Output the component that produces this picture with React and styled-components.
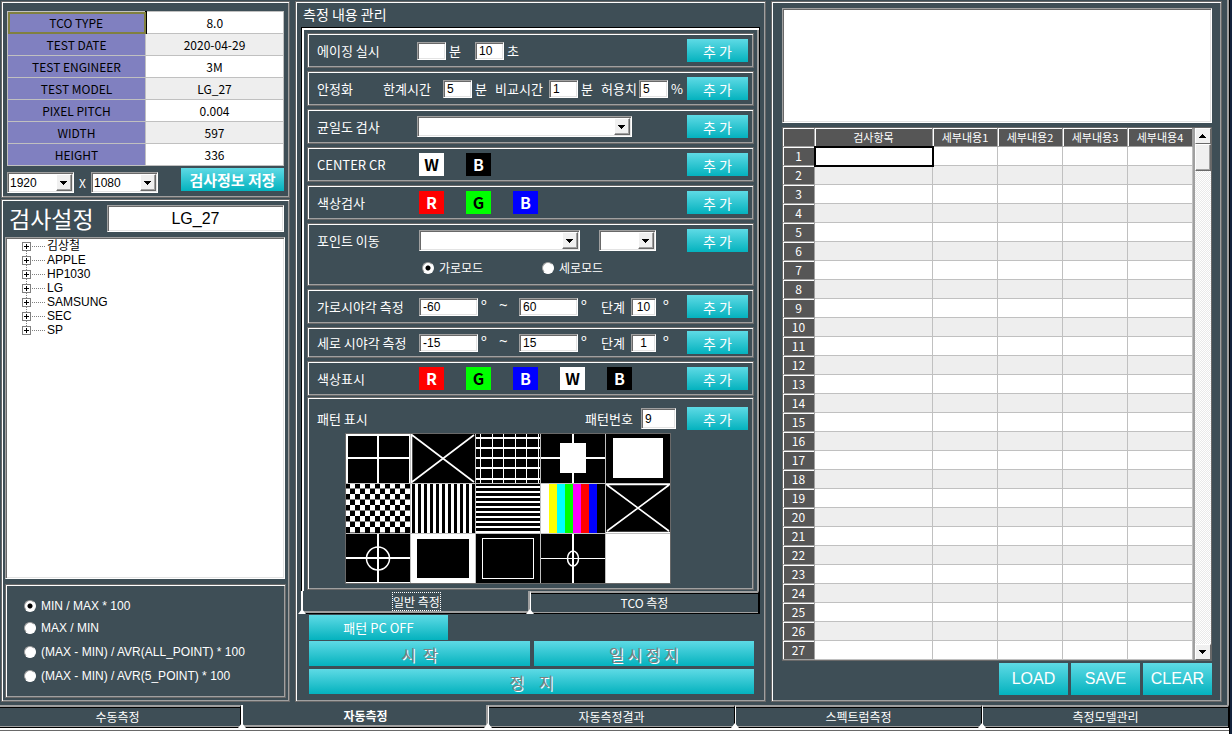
import React, { useState } from 'react'
import styled, { createGlobalStyle, css } from 'styled-components';

const KR_FONT = `'Noto Sans CJK KR', sans-serif`;
const SYMBOL_FONT = `'Noto Sans', 'Noto Sans CJK KR', sans-serif`;
const CLASSIC_FONT = `'Liberation Sans', 'Noto Sans CJK KR', sans-serif`;

const BG = '#3e4e56';
const DARK = '#696969';
const GRAY = '#a0a0a0';

const GlobalStyle = createGlobalStyle`
  * {
    box-sizing: border-box;
  }
  body {
    margin: 0;
    background: #14233c;
    font-family: ${KR_FONT};
    font-size: 12px;
    color: #fff;
  }
  button, input, select, textarea {
    margin: 0;
    border-radius: 0;
    font-family: inherit;
  }
`;

const raised = css`
  border: 1px solid ${DARK};
  box-shadow: inset 1px 1px 0 #fff, inset -1px -1px 0 ${GRAY};
`;

const sunken = css`
  border: 1px solid;
  border-color: ${GRAY} #fff #fff ${GRAY};
  box-shadow: inset 1px 1px 0 ${DARK}, inset -1px -1px 0 #e3e3e3;
  background: #fff;
  color: #000;
`;

/* ---------- window ---------- */

const Window = styled.div`
  margin-right: 2px;
  background: ${BG};
  border-right: 1px solid #000;
`;

const Page = styled.main`
  display: grid;
  grid-template-columns: 289fr 471fr 451fr;
  gap: 5px;
  padding: 1px 5px 3px 1px;
  border-right: 2px solid ${GRAY};
`;

const Column = styled.div`
  display: flex;
  flex-direction: column;
  gap: 1px;
  min-width: 0;
`;

const Panel = styled.section`
  ${raised}
  display: flex;
  flex-direction: column;
  flex: ${({ $grow }) => ($grow ? '1 1 auto' : '0 0 auto')};
  padding: ${({ $pad }) => $pad};
`;

/* ---------- controls ---------- */

const Button = styled.button`
  flex: 0 0 auto;
  width: ${({ $w }) => ($w ? `${$w}px` : 'auto')};
  height: ${({ $h }) => $h || 23}px;
  padding: 0;
  border: 0;
  background: linear-gradient(#5edae5, #04b2be);
  color: #fff;
  font-family: ${KR_FONT};
  font-size: ${({ $size }) => $size || 14}px;
  line-height: 20px;
  white-space: pre;
`;

const AddButton = styled(Button)`
  width: 61px;
  margin-left: auto;
`;

const SaveInfoButton = styled(Button)`
  margin-left: auto;
  align-self: flex-start;
  font-size: 15px;
  font-weight: 700;
`;

const CommandButton = styled(Button)`
  font-family: ${CLASSIC_FONT};
`;

const RunButton = styled(Button)`
  flex: 1 1 0;
  height: 25px;
  font-size: 16px;
  color: #808080;
  text-shadow: 1px 1px 0 #fff;
`;

const Field = styled.input`
  ${sunken}
  flex: 0 0 auto;
  width: ${({ $w }) => $w}px;
  height: ${({ $h }) => $h || 18}px;
  padding: 0 3px;
  font-family: ${CLASSIC_FONT};
  font-size: 12px;
  text-align: ${({ $center }) => ($center ? 'center' : 'left')};
`;

const ModelField = styled.input`
  ${sunken}
  flex: 1 1 auto;
  min-width: 0;
  height: 27px;
  font-family: ${CLASSIC_FONT};
  font-size: 16px;
  text-align: center;
`;

const SelectBox = styled.span`
  position: relative;
  display: block;
  flex: 0 0 auto;
  width: ${({ $w }) => $w}px;
  margin-right: ${({ $gap }) => $gap || 0}px;
`;

const NativeSelect = styled.select`
  ${sunken}
  appearance: none;
  display: block;
  width: 100%;
  height: 21px;
  padding: 0 18px 0 2px;
  font-family: ${CLASSIC_FONT};
  font-size: 12px;
`;

const DropMark = styled.span`
  position: absolute;
  top: 2px;
  right: 2px;
  width: 16px;
  height: 17px;
  border: 1px solid;
  border-color: #fff ${DARK} ${DARK} #fff;
  box-shadow: inset -1px -1px 0 ${GRAY};
  background: #f0f0f0;
  pointer-events: none;
`;

const Select = ({ label, options, width, gap }) => (
  <SelectBox $w={width} $gap={gap}>
    <NativeSelect aria-label={label}>
      {options.map((option) => <option key={option}>{option}</option>)}
    </NativeSelect>
    <DropMark>
      <svg width="14" height="15" shapeRendering="crispEdges">
        <path d="M3 6h7v1h-1v1h-1v1h-1v1h-1v-1h-1v-1h-1v-1h-1z" />
      </svg>
    </DropMark>
  </SelectBox>
);

const RadioLabel = styled.label`
  display: flex;
  align-items: center;
  gap: 5px;
  width: ${({ $w }) => ($w ? `${$w}px` : 'auto')};
  height: ${({ $h }) => $h || 16}px;
  font-family: ${({ $classic }) => ($classic ? CLASSIC_FONT : KR_FONT)};
  font-size: 12px;
  line-height: 16px;
`;

const RadioInput = styled.input`
  appearance: none;
  width: 12px;
  height: 12px;
  border: 1px solid;
  border-color: ${GRAY} #fff #fff ${GRAY};
  border-radius: 50%;
  background: #fff;

  &:checked {
    background: radial-gradient(circle, #000 2px, #fff 3px);
  }
`;

const Radio = ({ text, ...rest }) => {
  const { width, height, classic, ...input } = rest;
  return (
    <RadioLabel $w={width} $h={height} $classic={classic}>
      <RadioInput type="radio" {...input} />
      {text}
    </RadioLabel>
  );
};

/* ---------- left column ---------- */

const InfoTable = styled.table`
  width: 100%;
  table-layout: fixed;
  border-collapse: collapse;
  border: 1px solid ${DARK};
  color: #000;
  line-height: 16px;

  th, td {
    height: 22px;
    padding: 0;
    font-weight: 400;
    text-align: center;
    border: 1px solid #c0c0c0;
  }
  th {
    background: #8080c0;
  }
  td {
    background: #fff;
  }
  tr:nth-child(even) td {
    background: #eee;
  }
  tr:first-child th {
    outline: 2px solid #808040;
    outline-offset: -2px;
    border-right: 2px solid #000;
  }
`;

const SizeRow = styled.div`
  display: flex;
  align-items: flex-end;
  height: 25px;
  margin-top: 2px;
`;

const Times = styled.span`
  width: 17px;
  text-align: center;
  line-height: 20px;
`;

const SetupHead = styled.div`
  display: flex;
  align-items: center;
  padding: 0 2px 0 4px;
`;

const SetupTitle = styled.h2`
  flex: 0 0 98px;
  margin: 0;
  font-family: ${KR_FONT};
  font-size: 23px;
  font-weight: 400;
  line-height: 27px;
`;

const Tree = styled.ul`
  ${sunken}
  flex: 1 1 auto;
  margin: 5px 1px 5px 0;
  padding: 1px 0 0 16px;
  list-style: none;
  font-family: ${CLASSIC_FONT};
  font-size: 12px;
`;

const TreeItem = styled.li`
  display: flex;
  align-items: center;
  gap: 1px;
  height: 14px;
  line-height: 14px;
`;

const FormulaBox = styled.fieldset`
  ${raised}
  display: flex;
  flex-direction: column;
  min-width: 0;
  margin: 0;
  padding: 10px 18px 10px;
`;

/* ---------- middle column ---------- */

const PanelTitle = styled.h2`
  margin: 0 0 4px 2px;
  font-family: ${KR_FONT};
  font-size: 14px;
  font-weight: 400;
  line-height: 18px;
`;

const TabBox = styled.div`
  border: 1px solid #000;
  border-bottom: 0;
  box-shadow: inset 2px 2px 0 #fff, inset -2px 0 0 ${GRAY};
  padding: 5px 5px 0;
`;

const Group = styled.div`
  ${raised}
  display: flex;
  flex-direction: column;
  justify-content: ${({ $top }) => ($top ? 'flex-start' : 'center')};
  height: ${({ $h }) => $h || 35}px;
  margin-bottom: ${({ $gap }) => $gap || 3}px;
  padding: ${({ $top }) => $top || 0}px 5px 0 9px;
`;

const Line = styled.div`
  display: flex;
  align-items: center;
  font-family: ${KR_FONT};
  font-size: 13px;
  line-height: 20px;
  white-space: nowrap;
`;

const Caption = styled.span`
  flex: 0 0 auto;
  width: ${({ $w }) => $w}px;
`;

const Unit = styled.span`
  flex: 0 0 auto;
  width: ${({ $w }) => $w}px;
  padding-left: 3px;
`;

const Degree = styled(Unit)`
  align-self: flex-start;
  font-family: ${SYMBOL_FONT};
  font-size: 15px;
  line-height: 18px;
`;

const Swatch = styled.button`
  width: 25px;
  height: 23px;
  margin: 0 22px 0 0;
  padding: 0;
  border: 0;
  background: ${({ $bg }) => $bg};
  color: ${({ $fg }) => $fg};
  font-family: ${KR_FONT};
  font-size: 16px;
  font-weight: 700;
  line-height: 23px;
`;

const ModeRow = styled.div`
  display: flex;
  padding: 8px 0 0 105px;
`;

const PatternGrid = styled.div`
  display: grid;
  grid-template-columns: repeat(5, 64px);
  gap: 1px;
  width: 326px;
  margin: 3px 0 0 28px;
  border: 1px solid ${DARK};
  background: #c0c0c0;

  svg {
    display: block;
    background: #000;
  }
`;

const Tabs = styled.nav`
  display: flex;
`;

const Tab = styled.button`
  position: relative;
  flex: 1 1 0;
  height: 23px;
  padding: 0;
  background: ${BG};
  color: #fff;
  font-family: ${KR_FONT};
  font-size: 12px;
  font-weight: ${({ $active, $bold }) => ($active && $bold ? 700 : 400)};
  line-height: 16px;
  border: 0 solid;
  border-color: ${GRAY} #000 #000 #fff;
  border-width: ${({ $active }) => ($active ? '0 0 1px 2px' : '2px 1px 1px 1px')};
  box-shadow: ${({ $active }) => ($active
    ? `inset -2px -2px 0 ${GRAY}`
    : `inset 0 1px 0 #000, inset 0 -1px 0 ${GRAY}`)};

  /* notch where two tabs meet */
  &::before {
    content: '';
    position: absolute;
    left: -5px;
    bottom: -1px;
    width: 8px;
    height: 5px;
    background: #fff;
    clip-path: polygon(50% 0, 100% 100%, 0 100%);
    z-index: 1;
  }
`;

const InnerTabs = styled(Tabs)`
  border-right: 1px solid #000;
`;

const FocusText = styled.span`
  outline: 1px dotted #fff;
`;

const Commands = styled.div`
  display: flex;
  flex-direction: column;
  padding: 1px 6px 0 8px;
`;

const CommandRow = styled.div`
  display: flex;
  gap: 4px;
  margin-bottom: ${({ $gap }) => $gap || 1}px;
`;

/* ---------- right column ---------- */

const Memo = styled.textarea`
  ${sunken}
  display: block;
  width: 100%;
  height: 115px;
  resize: none;
`;

const SheetFrame = styled.div`
  display: flex;
  margin-top: 4px;
  border: 1px solid ${DARK};
`;

const Sheet = styled.table`
  flex: 1 1 0;
  min-width: 0;
  table-layout: fixed;
  border-collapse: separate;
  border-spacing: 0;
  color: #000;
  line-height: 16px;

  th, td {
    height: 19px;
    padding: 0;
    border: 0 solid #c0c0c0;
    border-width: 0 1px 1px 0;
  }
  th {
    background: #565656;
    color: #fff;
    font-weight: 400;
    text-align: center;
    border-color: ${GRAY};
    box-shadow: inset 1px 1px 0 #fff;
  }
  thead th {
    font-size: 11px;
  }
  td {
    background: #fff;
  }
  tbody tr:nth-child(even) td {
    background: #eee;
  }
  tbody tr:first-child td:nth-child(2) {
    outline: 2px solid #000;
    outline-offset: -1px;
  }
`;

const ScrollTrack = styled.div`
  display: flex;
  flex-direction: column;
  flex: 0 0 18px;
  border-left: 2px solid ${GRAY};
  background: repeating-conic-gradient(#fff 0 25%, #eaeaea 0 50%) 0 0 / 2px 2px;
`;

const ScrollButton = styled.button`
  width: 16px;
  height: 16px;
  padding: 0;
  border: 1px solid;
  border-color: #fff ${DARK} ${DARK} #fff;
  background: #f0f0f0;

  &:last-child {
    margin-top: auto;
  }
  svg {
    display: block;
  }
`;

const ScrollThumb = styled.div`
  height: 27px;
  border: 1px solid;
  border-color: #fff ${DARK} ${DARK} #fff;
  box-shadow: inset -1px -1px 0 ${GRAY};
  background: #f0f0f0;
`;

const SheetCommands = styled.div`
  display: flex;
  justify-content: flex-end;
  gap: 3px;
  margin-top: 2px;
`;

/* ---------- bottom ---------- */

const BottomTabs = styled(Tabs)`
  margin-left: -6px;
`;

const Footer = styled.div`
  height: 6px;
  border: solid #fff;
  border-width: 2px 0;
  background: ${DARK};
  background-clip: padding-box;
  box-shadow: inset 0 -1px 0 #fff;
`;

const INFO = [
  ['TCO TYPE', '8.0'],
  ['TEST DATE', '2020-04-29'],
  ['TEST ENGINEER', '3M'],
  ['TEST MODEL', 'LG_27'],
  ['PIXEL PITCH', '0.004'],
  ['WIDTH', '597'],
  ['HEIGHT', '336'],
];

const MODELS = ['김상철', 'APPLE', 'HP1030', 'LG', 'SAMSUNG', 'SEC', 'SP'];

const FORMULAS = [
  ['MIN / MAX * 100', 22],
  ['MAX / MIN', 22],
  ['(MAX - MIN) / AVR(ALL_POINT) * 100', 26],
  ['(MAX - MIN) / AVR(5_POINT) * 100', 22],
];

const COLORS = {
  W: ['W', '#fff', '#000'],
  K: ['B', '#000', '#fff'],
  R: ['R', '#f00', '#fff'],
  G: ['G', '#0f0', '#000'],
  B: ['B', '#00f', '#fff'],
};

const SHEET_HEADS = ['검사항목', '세부내용1', '세부내용2', '세부내용3', '세부내용4'];
const PAGES = ['수동측정', '자동측정', '자동측정결과', '스펙트럼측정', '측정모델관리'];

const range = (n) => Array.from({ length: n }, (_, i) => i);

const Swatches = ({ keys }) => keys.split('').map((k) => (
  <Swatch key={k} $bg={COLORS[k][1]} $fg={COLORS[k][2]}>{COLORS[k][0]}</Swatch>
));

const Expander = ({ first, last }) => (
  <svg width="24" height="14" shapeRendering="crispEdges" fill="none">
    <path d={`M4.5 ${first ? 6 : 0}V${last ? 6 : 14}M10 7.5H24`} stroke="#808080" strokeDasharray="1 1" />
    <rect x="0.5" y="3.5" width="8" height="8" fill="#fff" stroke="#808080" />
    <path d="M2 7.5h5M4.5 5v5" stroke="#000" />
  </svg>
);

/* test patterns, each one drawn on a 64 x 49 cell */
const PATTERNS = [
  <path d="M0.5 0V49M0 .5H64M63.5 0V49M32 0V49M0 24H64" stroke="#fff" strokeWidth="2" shapeRendering="crispEdges" />,
  <path d="M1 1L63 48M63 1L1 48M.5 0V49" stroke="#fff" strokeWidth="1.6" />,
  <>
    {[4, 16, 27, 39, 50, 62].map((x) => <path key={x} d={`M${x}.5 0V49`} stroke="#fff" />)}
    {[4, 14, 24, 34, 45].map((y) => <path key={y} d={`M0 ${y}H64`} stroke="#fff" strokeWidth="2" />)}
  </>,
  <>
    <path d="M32 0V49M0 24H64" stroke="#fff" strokeWidth="2" />
    <rect x="19" y="9" width="26" height="30" fill="#fff" />
  </>,
  <rect x="7" y="4" width="50" height="40" fill="#fff" />,
  range(9).map((r) => range(13).filter((c) => (r + c) % 2 === 1).map((c) => (
    <rect key={`${r}-${c}`} x={c * 5 - 1} y={r * 5.5 - 1} width="5" height="5.5" fill="#fff" />
  ))),
  range(11).map((i) => <rect key={i} x={i * 6 - 2} y="0" width="3" height="49" fill="#fff" />),
  range(10).map((i) => <rect key={i} x="0" y={i * 5 + 2} width="64" height="2" fill="#fff" />),
  ['#fff', '#ff0', '#0ff', '#0f0', '#f0f', '#f00', '#00f'].map((c, i) => (
    <rect key={c} x={i * 8} y="0" width="8" height="49" fill={c} />
  )),
  <path d="M0 .5H64M1 1L63 47M63 1L1 47M0 48.5H64" stroke="#fff" strokeWidth="1.6" />,
  <>
    <path d="M32 0V49M0 24H64M0 49H64" stroke="#fff" strokeWidth="2" />
    <circle cx="32" cy="24.5" r="11.5" fill="none" stroke="#fff" strokeWidth="1.5" />
  </>,
  <>
    <rect width="64" height="49" fill="#fff" />
    <rect x="6" y="5" width="52" height="39" />
  </>,
  <rect x="6.5" y="4.5" width="51" height="40" fill="none" stroke="#fff" />,
  <>
    <path d="M32 0V49" stroke="#fff" strokeWidth="2" />
    <path d="M0 24.5H64" stroke="#fff" />
    <ellipse cx="32" cy="24.5" rx="5.5" ry="7.5" fill="none" stroke="#fff" strokeWidth="1.5" />
  </>,
  <rect width="64" height="49" fill="#fff" />,
];

const AngleLine = ({ title, from, to, step }) => (
  <Line>
    <Caption $w={102}>{title}</Caption>
    <Field $w={59} defaultValue={from} aria-label={`${title} 시작`} />
    <Degree $w={18}>º</Degree>
    <Degree $w={23}>~</Degree>
    <Field $w={59} defaultValue={to} aria-label={`${title} 끝`} />
    <Degree $w={20}>º</Degree>
    <Unit $w={33}>단계</Unit>
    <Field $w={25} $center defaultValue={step} aria-label={`${title} 단계`} />
    <Degree $w={16}>&nbsp;º</Degree>
    <AddButton>추 가</AddButton>
  </Line>
);

const LeftColumn = () => (
  <Column>
    <Panel $pad="9px 5px 4px">
      <InfoTable>
        <tbody>
          {INFO.map(([name, value]) => (
            <tr key={name}><th scope="row">{name}</th><td>{value}</td></tr>
          ))}
        </tbody>
      </InfoTable>
      <SizeRow>
        <Select label="가로 해상도" options={['1920']} width={67} />
        <Times>X</Times>
        <Select label="세로 해상도" options={['1080']} width={67} />
        <SaveInfoButton $w={103}>검사정보 저장</SaveInfoButton>
      </SizeRow>
    </Panel>

    <Panel $grow $pad="5px 3px 3px">
      <SetupHead>
        <SetupTitle>검사설정</SetupTitle>
        <ModelField defaultValue="LG_27" aria-label="검사설정" />
      </SetupHead>
      <Tree>
        {MODELS.map((name, i) => (
          <TreeItem key={name}>
            <Expander first={i === 0} last={i === MODELS.length - 1} />
            {name}
          </TreeItem>
        ))}
      </Tree>
      <FormulaBox>
        {FORMULAS.map(([text, height], i) => (
          <Radio key={text} text={text} name="formula" height={height} classic defaultChecked={i === 0} />
        ))}
      </FormulaBox>
    </Panel>
  </Column>
);

const MiddleColumn = () => (
  <Panel $pad="3px 5px 0">
    <PanelTitle>측정 내용 관리</PanelTitle>
    <TabBox>
      <Group>
        <Line>
          <Caption $w={100}>에이징 실시</Caption>
          <Field $w={29} aria-label="에이징 분" />
          <Unit $w={29}>분</Unit>
          <Field $w={29} defaultValue="10" aria-label="에이징 초" />
          <Unit $w={29}>초</Unit>
          <AddButton>추 가</AddButton>
        </Line>
      </Group>
      <Group>
        <Line>
          <Caption $w={66}>안정화</Caption>
          <Caption $w={60}>한계시간</Caption>
          <Field $w={29} defaultValue="5" aria-label="한계시간" />
          <Unit $w={23}>분</Unit>
          <Caption $w={54}>비교시간</Caption>
          <Field $w={29} defaultValue="1" aria-label="비교시간" />
          <Unit $w={23}>분</Unit>
          <Caption $w={38}>허용치</Caption>
          <Field $w={29} defaultValue="5" aria-label="허용치" />
          <Unit $w={16}>%</Unit>
          <AddButton>추 가</AddButton>
        </Line>
      </Group>
      <Group>
        <Line>
          <Caption $w={100}>균일도 검사</Caption>
          <Select label="균일도 검사" options={['']} width={215} />
          <AddButton>추 가</AddButton>
        </Line>
      </Group>
      <Group>
        <Line>
          <Caption $w={102}>CENTER CR</Caption>
          <Swatches keys="WK" />
          <AddButton>추 가</AddButton>
        </Line>
      </Group>
      <Group>
        <Line>
          <Caption $w={102}>색상검사</Caption>
          <Swatches keys="RGB" />
          <AddButton>추 가</AddButton>
        </Line>
      </Group>
      <Group $h={63} $top={5}>
        <Line>
          <Caption $w={102}>포인트 이동</Caption>
          <Select label="포인트" options={['']} width={161} gap={19} />
          <Select label="포인트 번호" options={['']} width={57} />
          <AddButton>추 가</AddButton>
        </Line>
        <ModeRow>
          <Radio text="가로모드" name="mode" width={120} defaultChecked />
          <Radio text="세로모드" name="mode" />
        </ModeRow>
      </Group>
      <Group>
        <AngleLine title="가로시야각 측정" from="-60" to="60" step="10" />
      </Group>
      <Group $h={31}>
        <AngleLine title="세로 시야각 측정" from="-15" to="15" step="1" />
      </Group>
      <Group $gap={1}>
        <Line>
          <Caption $w={102}>색상표시</Caption>
          <Swatches keys="RGBWK" />
          <AddButton>추 가</AddButton>
        </Line>
      </Group>
      <Group $h={193} $top={9} $gap={1}>
        <Line>
          <Caption $w={268}>패턴 표시</Caption>
          <Caption $w={56}>패턴번호</Caption>
          <Field $w={35} $h={21} defaultValue="9" aria-label="패턴번호" />
          <AddButton>추 가</AddButton>
        </Line>
        <PatternGrid>
          {PATTERNS.map((pattern, i) => (
            <svg key={i} width="64" height="49" viewBox="0 0 64 49">{pattern}</svg>
          ))}
        </PatternGrid>
      </Group>
    </TabBox>
    <InnerTabs>
      <Tab $active><FocusText>일반 측정</FocusText></Tab>
      <Tab>TCO 측정</Tab>
    </InnerTabs>
    <Commands>
      <CommandRow><Button $w={139} $h={25} $size={13}>패턴 PC OFF</Button></CommandRow>
      <CommandRow $gap={3}>
        <RunButton>{'시  작'}</RunButton>
        <RunButton>일 시 정 지</RunButton>
      </CommandRow>
      <CommandRow><RunButton>{'정    지'}</RunButton></CommandRow>
    </Commands>
  </Panel>
);

const RightColumn = () => (
  <Panel $pad="6px 9px 6px 10px">
    <Memo aria-label="메모" />
    <SheetFrame>
      <Sheet>
        <colgroup>
          <col width="32" />
          <col />
          <col width="65" />
          <col width="65" />
          <col width="65" />
          <col width="65" />
        </colgroup>
        <thead>
          <tr>
            <th />
            {SHEET_HEADS.map((head) => <th key={head} scope="col">{head}</th>)}
          </tr>
        </thead>
        <tbody>
          {range(27).map((row) => (
            <tr key={row}>
              <th scope="row">{row + 1}</th>
              {SHEET_HEADS.map((head) => <td key={head} />)}
            </tr>
          ))}
        </tbody>
      </Sheet>
      <ScrollTrack>
        <ScrollButton aria-label="위로">
          <svg width="14" height="14" shapeRendering="crispEdges">
            <path d="M3 9h7v-1h-1v-1h-1v-1h-1v-1h-1v1h-1v1h-1v1h-1z" />
          </svg>
        </ScrollButton>
        <ScrollThumb />
        <ScrollButton aria-label="아래로">
          <svg width="14" height="14" shapeRendering="crispEdges">
            <path d="M3 5h7v1h-1v1h-1v1h-1v1h-1v-1h-1v-1h-1v-1h-1z" />
          </svg>
        </ScrollButton>
      </ScrollTrack>
    </SheetFrame>
    <SheetCommands>
      {['LOAD', 'SAVE', 'CLEAR'].map((name) => (
        <CommandButton key={name} $w={69} $h={32} $size={16}>{name}</CommandButton>
      ))}
    </SheetCommands>
  </Panel>
);

const App = () => {
  const [page, setPage] = useState(1);

  return (
    <>
      <GlobalStyle />
      <Window>
        <Page>
          <LeftColumn />
          <MiddleColumn />
          <RightColumn />
        </Page>
        <BottomTabs>
          {PAGES.map((name, i) => (
            <Tab key={name} $bold $active={i === page} onClick={() => setPage(i)}>{name}</Tab>
          ))}
        </BottomTabs>
        <Footer />
      </Window>
    </>
  )
}

export default App;
